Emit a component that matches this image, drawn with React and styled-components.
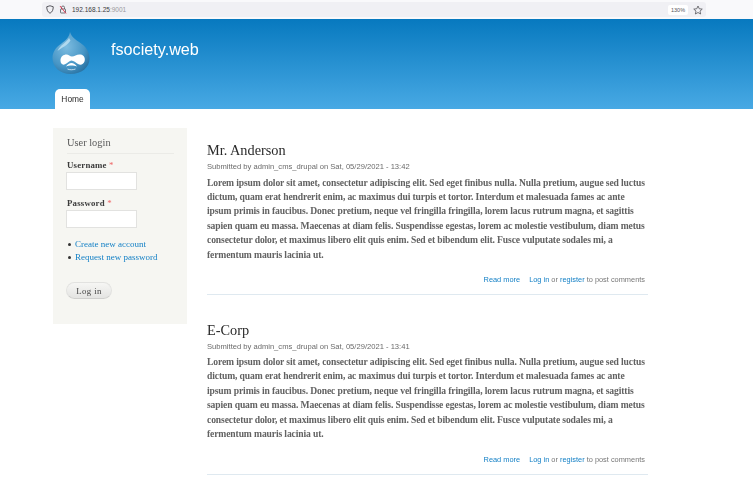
import React from 'react';
import styled, { createGlobalStyle } from 'styled-components';

const GlobalStyle = createGlobalStyle`
  html, body {
    margin: 0;
    padding: 0;
    background: #fff;
    overflow: hidden;
  }
  * {
    box-sizing: border-box;
  }
`;

const Page = styled.div`
  width: 753px;
  height: 495px;
  overflow: hidden;
  font-family: 'Liberation Sans', Arial, sans-serif;
  filter: blur(0.35px);
`;

const BrowserBar = styled.div`
  height: 19px;
  padding: 2px 47px 2px 42px;
  background: #f9f9fb;
`;

const UrlField = styled.div`
  height: 15px;
  padding: 0 3px 0 4px;
  display: flex;
  align-items: center;
  background: #f0f0f4;
  border-radius: 3px;
`;

const UrlText = styled.span`
  margin-left: 5px;
  font-size: 6.5px;
  color: #3a3a40;
`;

const UrlPort = styled.span`
  color: #9a9aa0;
`;

const ZoomChip = styled.span`
  margin-left: auto;
  width: 20px;
  height: 10px;
  background: #fff;
  border-radius: 2px;
  font-size: 5.5px;
  line-height: 10px;
  text-align: center;
  color: #55555a;
`;

const StarSlot = styled.span`
  margin-left: 5px;
  width: 10px;
  display: flex;
`;

const Header = styled.header`
  height: 90px;
  padding: 13px 0 0 52px;
  display: flex;
  flex-direction: column;
  background: linear-gradient(180deg, #0779bf 0%, #48a9e4 100%);
`;

const Brand = styled.div`
  display: flex;
  align-items: flex-start;
  gap: 21px;
`;

const SiteName = styled.div`
  margin-top: 7px;
  font-size: 16.2px;
  line-height: 20px;
  color: #fff;
`;

const Tab = styled.div`
  width: 35px;
  height: 20px;
  margin: auto 0 0 3px;
  background: #fff;
  border-radius: 5px 5px 0 0;
  font-size: 8.4px;
  line-height: 20px;
  text-align: center;
  color: #2e2e2e;
`;

const Layout = styled.div`
  padding: 19px 0 0 53px;
  display: flex;
  align-items: flex-start;
  gap: 20px;
`;

const Sidebar = styled.aside`
  width: 134px;
  height: 196px;
  padding: 8px 13px 0 14px;
  flex-shrink: 0;
  background: #f6f6f2;
  font-family: 'Liberation Serif', 'Times New Roman', serif;
  color: #3b3b3b;
`;

const BlockTitle = styled.h2`
  margin: 0 0 6px;
  padding-bottom: 3px;
  border-bottom: 1px solid #ebebe7;
  font-size: 10.4px;
  line-height: 14px;
  font-weight: normal;
  color: #5a5a5a;
`;

const Field = styled.div`
  margin-bottom: ${(p) => p.$gap}px;
`;

const Label = styled.label`
  display: block;
  height: 11px;
  margin-bottom: 1px;
  font-size: 8.8px;
  line-height: 11px;
  font-weight: bold;
  letter-spacing: 0.2px;
  color: #3b3b3b;
`;

const Required = styled.span`
  font-weight: normal;
  color: #ee6666;
`;

const TextInput = styled.input`
  display: block;
  width: 71px;
  height: 18px;
  margin-left: -1px;
  padding: 0;
  background: #fff;
  border: 1px solid #e2e2e0;
  border-radius: 0;
`;

const LinkList = styled.ul`
  margin: 0 0 18px;
  padding: 0;
  list-style: none;
`;

const LinkItem = styled.li`
  position: relative;
  height: 13px;
  padding-left: 8px;
  font-size: 9px;
  line-height: 13px;
  white-space: nowrap;
  &::before {
    content: '';
    position: absolute;
    left: 1px;
    top: 5px;
    width: 3px;
    height: 3px;
    border-radius: 50%;
    background: #333;
  }
`;

const Link = styled.a`
  color: #1480c6;
  text-decoration: none;
`;

const LoginButton = styled.button`
  display: block;
  width: 46px;
  height: 17px;
  margin-left: -1px;
  padding: 0;
  background: linear-gradient(180deg, #f6f6f4, #e4e4e2);
  border: 1px solid #e2e2e0;
  border-bottom-color: #cfcfcd;
  border-radius: 9px;
  font-family: 'Liberation Serif', 'Times New Roman', serif;
  font-size: 8.8px;
  letter-spacing: 0.4px;
  color: #444;
`;

const Main = styled.main`
  width: 441px;
  flex-shrink: 0;
`;

const Article = styled.article`
  height: 179.5px;
  padding-top: 13px;
`;

const ArticleTitle = styled.h2`
  margin: 0;
  font-family: 'Liberation Serif', 'Times New Roman', serif;
  font-size: 14.3px;
  line-height: 18px;
  font-weight: normal;
  color: #2a2a2a;
`;

const Submitted = styled.div`
  margin-top: 2px;
  font-size: 7.6px;
  line-height: 12px;
  color: #6a6a6a;
`;

const Body = styled.div`
  margin-top: 2.5px;
  font-family: 'Liberation Serif', 'Times New Roman', serif;
  font-size: 9.6px;
  line-height: 14.4px;
  font-weight: bold;
  color: #626262;
`;

const BodyLine = styled.div`
  white-space: nowrap;
  letter-spacing: -0.12px;
`;

const ArticleLinks = styled.div`
  height: 27px;
  margin-top: 6.5px;
  padding: 6px 3px 0 0;
  display: flex;
  justify-content: flex-end;
  gap: 9px;
  border-bottom: 1px solid #dfe9f0;
  font-size: 7.4px;
  line-height: 12px;
  color: #777;
`;

const LoremLines = [
  'Lorem ipsum dolor sit amet, consectetur adipiscing elit. Sed eget finibus nulla. Nulla pretium, augue sed luctus',
  'dictum, quam erat hendrerit enim, ac maximus dui turpis et tortor. Interdum et malesuada fames ac ante',
  'ipsum primis in faucibus. Donec pretium, neque vel fringilla fringilla, lorem lacus rutrum magna, et sagittis',
  'sapien quam eu massa. Maecenas at diam felis. Suspendisse egestas, lorem ac molestie vestibulum, diam metus',
  'consectetur dolor, et maximus libero elit quis enim. Sed et bibendum elit. Fusce vulputate sodales mi, a',
  'fermentum mauris lacinia ut.',
];

const articles = [
  { title: 'Mr. Anderson', date: 'Sat, 05/29/2021 - 13:42' },
  { title: 'E-Corp', date: 'Sat, 05/29/2021 - 13:41' },
];

const ShieldIcon = () => (
  <svg width="8" height="9" viewBox="0 0 16 18" fill="none" stroke="#4a4a50" strokeWidth="1.8">
    <path d="M8 1.5 L14.5 3.5 C14.5 10 12.5 14 8 16.5 C3.5 14 1.5 10 1.5 3.5 Z" />
  </svg>
);

const LockIcon = () => (
  <svg width="8" height="9" viewBox="0 0 16 18" fill="none" style={{ marginLeft: 5 }}>
    <path d="M5 8V5a3 3 0 0 1 6 0v3" stroke="#55555a" strokeWidth="1.6" />
    <rect x="3" y="8" width="10" height="8" rx="1.2" stroke="#55555a" strokeWidth="1.6" />
    <path d="M2 2 L14 17" stroke="#e2304a" strokeWidth="1.8" />
  </svg>
);

const StarIcon = () => (
  <svg width="10" height="10" viewBox="0 0 20 20" fill="none" stroke="#55555a" strokeWidth="1.6">
    <path d="M10 2 L12.5 7.5 L18.5 8.2 L14 12.2 L15.3 18 L10 15 L4.7 18 L6 12.2 L1.5 8.2 L7.5 7.5 Z" />
  </svg>
);

const DrupalLogo = () => (
  <svg width="38" height="42" viewBox="0 0 38 42">
    <defs>
      <radialGradient id="drop" cx="0.38" cy="0.35" r="0.8">
        <stop offset="0" stopColor="#7dbce0" />
        <stop offset="0.6" stopColor="#4796c6" />
        <stop offset="1" stopColor="#1f6696" />
      </radialGradient>
    </defs>
    <path
      d="M18 0 C19.5 5 24 8 28.5 11 C34 14.5 37.5 20 37.5 26.5 C37.5 35.5 29.5 42 18.5 42 C8 42 0.5 35 0.5 26 C0.5 19 5 14.5 9.5 11.5 C13.5 8.5 17 5.5 18 0 Z"
      fill="url(#drop)"
    />
    <path d="M17 6 C14 11 8 13 5.5 19 C10 15.5 16 13 18.5 8.5 Z" fill="#bcdff2" opacity="0.85" />
    <path
      d="M8.5 28.5 C8.5 24.5 11.5 22.5 14.5 22.5 C16.5 22.5 18 24.5 20 24.5 C22.5 24.5 25 22 28.5 22.5 C32.5 23 33.5 27 32.5 29.5 C31.5 32.5 28.5 33.5 26 32 C24 30.8 21.5 28.5 19.5 28.5 C17.5 28.5 15.5 31 13 32.3 C10.5 33.5 8.5 31.5 8.5 28.5 Z"
      fill="#fff"
    />
    <path
      d="M14 34.5 C15.5 32.5 17.5 31 19.5 31 C21.5 31 23.5 32.5 25 34.5 C23 33.7 21.5 33.5 19.5 33.5 C17.5 33.5 15.5 33.7 14 34.5 Z"
      fill="#fff"
    />
    <path d="M15.5 37 C17.5 38 21 38 23.5 37" stroke="#dff0fa" strokeWidth="0.8" fill="none" />
  </svg>
);

const App = () => {
  return (
    <Page>
      <GlobalStyle />
      <BrowserBar>
        <UrlField>
          <ShieldIcon />
          <LockIcon />
          <UrlText>
            192.168.1.25<UrlPort>:9001</UrlPort>
          </UrlText>
          <ZoomChip>130%</ZoomChip>
          <StarSlot>
            <StarIcon />
          </StarSlot>
        </UrlField>
      </BrowserBar>

      <Header>
        <Brand>
          <DrupalLogo />
          <SiteName>fsociety.web</SiteName>
        </Brand>
        <Tab>Home</Tab>
      </Header>

      <Layout>
        <Sidebar>
          <BlockTitle>User login</BlockTitle>
          <Field $gap={8}>
            <Label>
              Username <Required>*</Required>
            </Label>
            <TextInput type="text" />
          </Field>
          <Field $gap={10}>
            <Label>
              Password <Required>*</Required>
            </Label>
            <TextInput type="password" />
          </Field>
          <LinkList>
            <LinkItem>
              <Link href="#">Create new account</Link>
            </LinkItem>
            <LinkItem>
              <Link href="#">Request new password</Link>
            </LinkItem>
          </LinkList>
          <LoginButton>Log in</LoginButton>
        </Sidebar>

        <Main>
          {articles.map((article) => (
            <Article key={article.title}>
              <ArticleTitle>{article.title}</ArticleTitle>
              <Submitted>Submitted by admin_cms_drupal on {article.date}</Submitted>
              <Body>
                {LoremLines.map((line) => (
                  <BodyLine key={line}>{line}</BodyLine>
                ))}
              </Body>
              <ArticleLinks>
                <Link href="#">Read more</Link>
                <span>
                  <Link href="#">Log in</Link> or <Link href="#">register</Link> to post comments
                </span>
              </ArticleLinks>
            </Article>
          ))}
        </Main>
      </Layout>
    </Page>
  );
};

export default App;
